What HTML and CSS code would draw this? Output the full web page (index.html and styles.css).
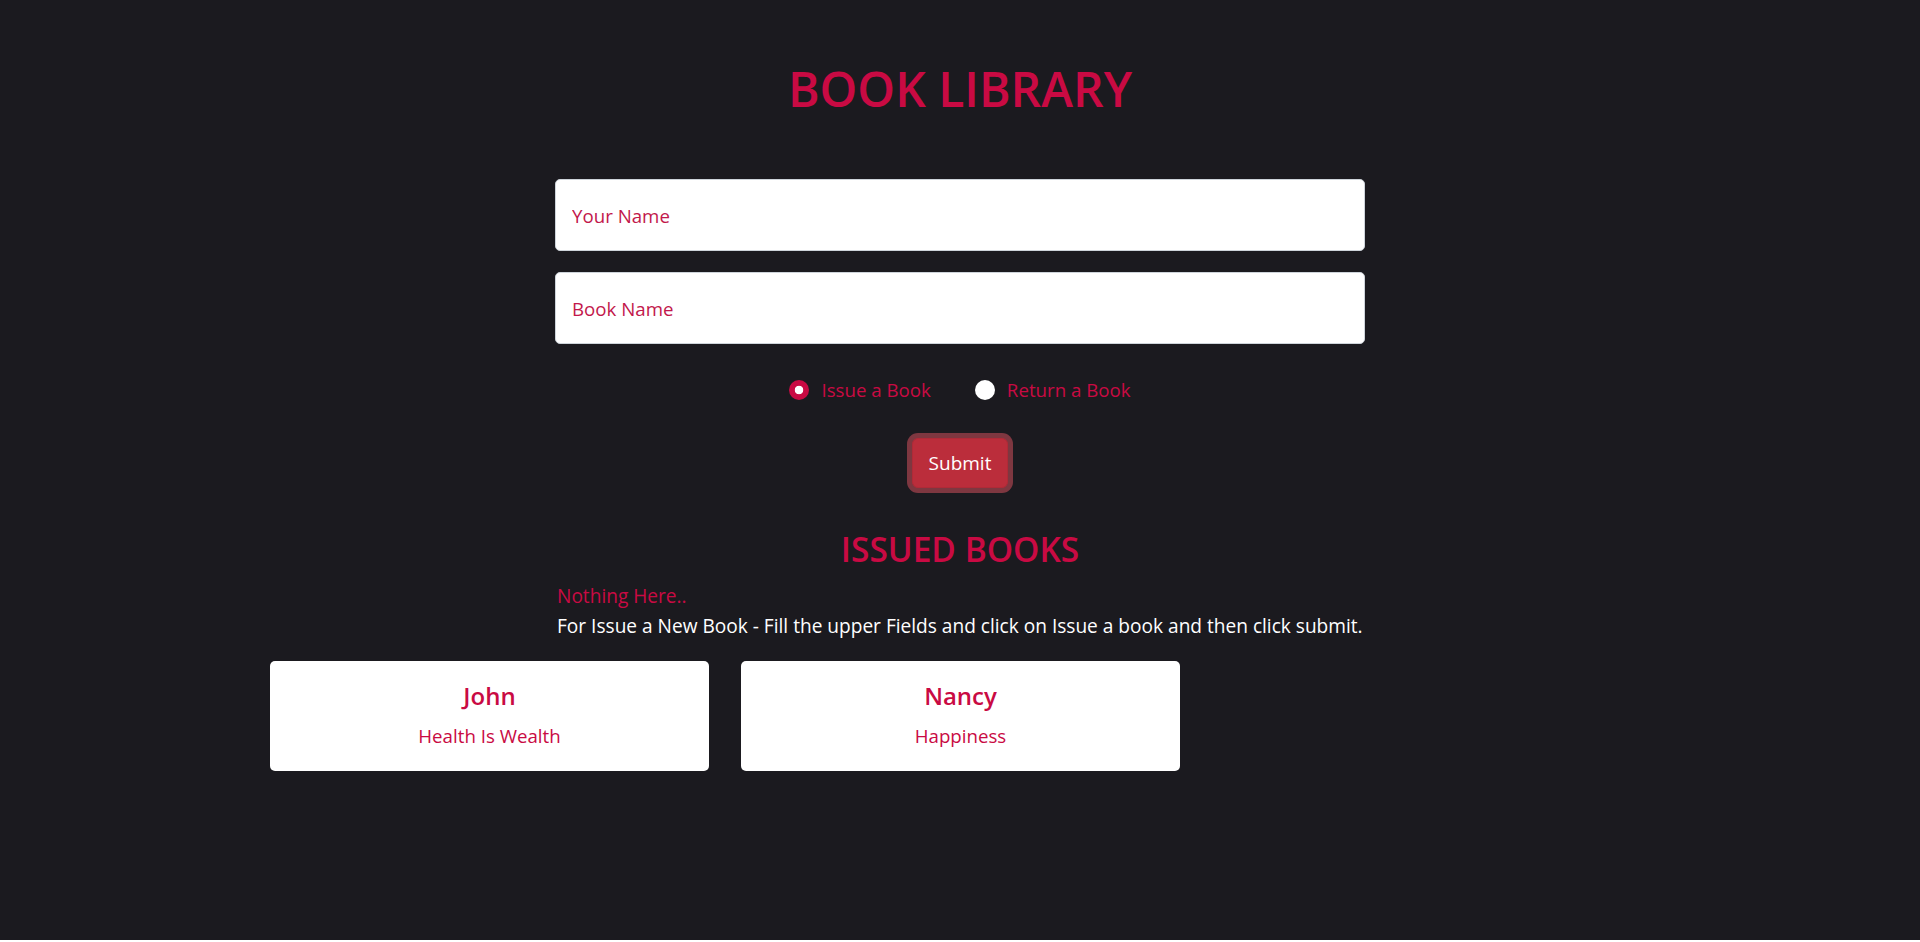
FILE: index.html
```html
<!DOCTYPE html>
<html lang="en">
<head>
<meta charset="utf-8">
<title>Book Library</title>
<link rel="stylesheet" href="styles.css">
</head>
<body>
<div class="page">
  <h1 class="title">BOOK LIBRARY</h1>
  <form class="form">
    <input class="field field-first" type="text" placeholder="Your Name">
    <input class="field" type="text" placeholder="Book Name">
    <div class="radios">
      <label class="radio-item"><input class="radio" type="radio" name="type" checked><span>Issue a Book</span></label>
      <label class="radio-item"><input class="radio" type="radio" name="type"><span>Return a Book</span></label>
    </div>
    <div class="submit-row">
      <button class="submit" type="button">Submit</button>
    </div>
  </form>
  <h2 class="subtitle">ISSUED BOOKS</h2>
  <div class="notes">
    <div class="empty">Nothing Here..</div>
    <div class="hint">For Issue a New Book - Fill the upper Fields and click on Issue a book and then click submit.</div>
  </div>
  <div class="cards">
    <div class="card">
      <div class="card-name">John</div>
      <div class="card-book">Health Is Wealth</div>
    </div>
    <div class="card">
      <div class="card-name">Nancy</div>
      <div class="card-book">Happiness</div>
    </div>
  </div>
</div>
</body>
</html>
```
FILE: styles.css
```css
html {
  background: #ffffff;
}
body {
  margin: 0;
  font-family: "Open Sans", "Noto Sans", sans-serif;
  font-size: 18.7px;
  line-height: 30px;
  color: #ffffff;
}
.page {
  background: #1b1a1f;
  height: 940px;
  padding-top: 60px;
  box-sizing: border-box;
}
.title {
  margin: 0 0 61px;
  text-align: center;
  font-size: 48px;
  line-height: 58px;
  font-weight: 600;
  color: #c90a43;
}
.form {
  width: 810px;
  margin: 0 auto;
}
.field {
  display: block;
  width: 100%;
  box-sizing: border-box;
  height: 72px;
  padding: 0 16px;
  border: 1px solid #ced4da;
  border-radius: 5px;
  background: #ffffff;
  font-family: inherit;
  font-size: 18.7px;
  color: #c90a43;
  outline: none;
}
.field::placeholder {
  color: #c2174b;
  opacity: 1;
}
.field-first {
  margin-bottom: 21px;
}
.radios {
  margin-top: 31px;
  display: flex;
  justify-content: center;
  gap: 44px;
  height: 30px;
  color: #c90a43;
}
.radio-item {
  display: flex;
  align-items: center;
  gap: 12px;
}
.radio {
  appearance: none;
  -webkit-appearance: none;
  margin: 0;
  width: 20px;
  height: 20px;
  border-radius: 50%;
  background: #ffffff;
}
.radio:checked {
  background: radial-gradient(circle, #ffffff 0 4px, #c90a43 4.6px);
}
.submit-row {
  margin-top: 33px;
  display: flex;
  justify-content: center;
}
.submit {
  height: 50px;
  padding: 0 16px;
  border: 1px solid #b02a37;
  border-radius: 6px;
  background: #bb2d3b;
  color: #ffffff;
  font-family: inherit;
  font-size: 19px;
  box-shadow: 0 0 0 5px rgba(225, 83, 97, 0.5);
}
.subtitle {
  margin: 41px 0 0;
  text-align: center;
  font-size: 33.5px;
  line-height: 40px;
  font-weight: 600;
  color: #c90a43;
}
.notes {
  width: 810px;
  margin: 12px auto 0;
  padding-left: 2px;
  box-sizing: border-box;
  font-size: 19.1px;
}
.empty {
  color: #c90a43;
}
.hint {
  color: #ffffff;
  white-space: nowrap;
}
.cards {
  display: flex;
  gap: 32px;
  padding-left: 270px;
  margin-top: 20px;
}
.card {
  width: 439px;
  height: 110px;
  box-sizing: border-box;
  background: #ffffff;
  border-radius: 5px;
  padding-top: 20px;
  text-align: center;
  color: #c90a43;
}
.card-name {
  font-size: 24px;
  line-height: 29px;
  font-weight: 600;
}
.card-book {
  margin-top: 11px;
  font-size: 18.7px;
  line-height: 30px;
}
```
